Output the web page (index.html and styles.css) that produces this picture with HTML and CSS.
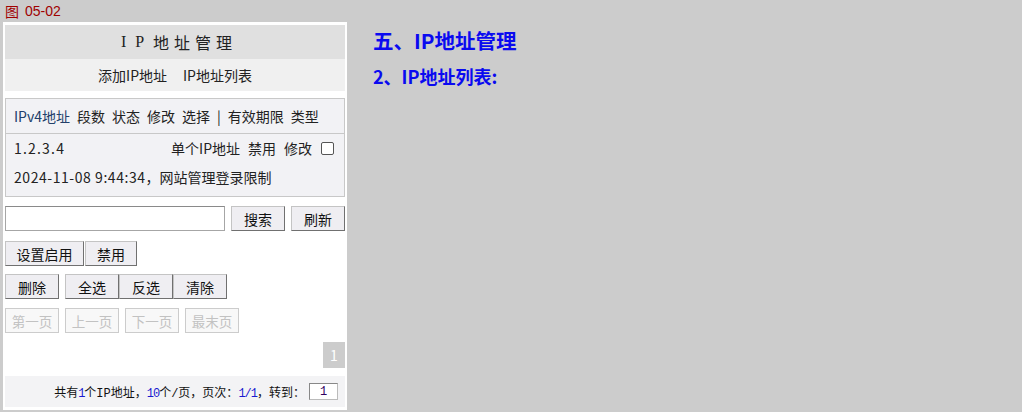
FILE: index.html
```html
<!DOCTYPE html>
<html lang="zh-CN">
<head>
<meta charset="utf-8">
<title>IP地址管理</title>
<link rel="stylesheet" href="styles.css">
</head>
<body>
<div class="page">
  <div class="left">
    <div class="fig"><span class="fig-zh">图</span><span>05-02</span></div>
    <div class="panel">
      <div class="title"><span class="lat">IP</span>地址管理</div>
      <div class="nav"><span>添加IP地址</span><span>IP地址列表</span></div>
      <div class="list">
        <div class="list-head">
          <span class="col-ip">IPv4地址</span><span>段数</span><span>状态</span><span>修改</span><span>选择</span><span class="bar">|</span><span>有效期限</span><span>类型</span>
        </div>
        <div class="list-item">
          <div class="row1">
            <span class="ip">1.2.3.4</span>
            <span class="row1-right"><span>单个IP地址</span><span>禁用</span><span>修改</span><span class="cb"></span></span>
          </div>
          <div class="row2"><span class="date">2024-11-08 9:44:34</span>，网站管理登录限制</div>
        </div>
      </div>
      <div class="btn-row r-search">
        <input class="search" type="text">
        <button class="btn w54 ml6">搜索</button>
        <button class="btn w54 ml6">刷新</button>
      </div>
      <div class="btn-row r-two">
        <button class="btn w79">设置启用</button>
        <button class="btn w52 ml1">禁用</button>
      </div>
      <div class="btn-row r-three">
        <button class="btn w54">删除</button>
        <button class="btn w54 ml6">全选</button>
        <button class="btn w54">反选</button>
        <button class="btn w54">清除</button>
      </div>
      <div class="btn-row r-four">
        <button class="btn dis w54">第一页</button>
        <button class="btn dis w54 ml6">上一页</button>
        <button class="btn dis w54 ml6">下一页</button>
        <button class="btn dis w54 ml6">最末页</button>
      </div>
      <div class="pager"><span class="pg">1</span></div>
      <div class="footer">
        <span>共有<b class="n">1</b>个IP地址，<b class="n">10</b>个/页，页次：<b class="n">1/1</b>，转到：</span><span class="goto">1</span>
      </div>
    </div>
  </div>
  <div class="right">
    <h1 class="h1">五、IP地址管理</h1>
    <h2 class="h2">2、IP地址列表:</h2>
  </div>
</div>
</body>
</html>
```

FILE: styles.css
```css
html, body {
  margin: 0;
  padding: 0;
  background: #cccccc;
}
body {
  font-family: "Noto Sans CJK SC", sans-serif;
  color: #222;
}
.page {
  display: flex;
  align-items: flex-start;
  padding-left: 3px;
}
.left {
  width: 344px;
  display: flex;
  flex-direction: column;
}
.fig {
  height: 22px;
  display: flex;
  align-items: center;
  gap: 6px;
  padding-left: 2px;
  font-family: "Liberation Sans", "Noto Sans CJK SC", sans-serif;
  font-size: 14px;
  color: #a00000;
}
.fig-zh {
  font-size: 14px;
}
.panel {
  background: #fff;
  padding: 3px 2px 3px 2px;
  display: flex;
  flex-direction: column;
}
.title {
  height: 34px;
  background: #e0e0e0;
  display: flex;
  align-items: center;
  justify-content: center;
  font-size: 16px;
  letter-spacing: 5px;
  padding-left: 8px;
  color: #222;
}
.title .lat {
  font-family: "Liberation Serif", serif;
  letter-spacing: 9px;
}
.nav {
  height: 32px;
  background: #f0f0f0;
  display: flex;
  align-items: center;
  justify-content: center;
  gap: 16px;
  font-size: 14px;
  color: #222;
}
.list {
  margin-top: 7px;
  border: 1px solid #c8c8c8;
  background: #f2f2f5;
}
.list-head {
  height: 34px;
  border-bottom: 1px solid #c8c8c8;
  display: flex;
  align-items: center;
  gap: 7px;
  padding-left: 8px;
  font-size: 14px;
  color: #222;
}
.list-head .col-ip {
  color: #23406a;
}
.list-item {
  padding: 0 10px 4px 8px;
  font-size: 14px;
  color: #222;
}
.row1 {
  height: 28px;
  display: flex;
  align-items: center;
  justify-content: space-between;
}
.ip {
  letter-spacing: 1.2px;
}
.row1-right {
  display: flex;
  align-items: center;
  gap: 8px;
}
.cb {
  width: 13px;
  height: 13px;
  box-sizing: border-box;
  border: 1px solid #555;
  border-radius: 2px;
  background: #fff;
  margin-left: 1px;
}
.row2 {
  height: 30px;
  line-height: 30px;
}
.date {
  letter-spacing: 0.55px;
}
.btn-row {
  display: flex;
  height: 25px;
}
.r-search { margin-top: 9px; }
.r-two { margin-top: 10px; }
.r-three { margin-top: 8px; }
.r-four { margin-top: 9px; }
.search {
  width: 220px;
  height: 25px;
  box-sizing: border-box;
  margin: 0;
  border: 1px solid #a6a6a6;
  border-top-color: #8a8a8a;
  background: #fff;
  padding: 0;
}
.btn {
  height: 25px;
  box-sizing: border-box;
  margin: 0;
  padding: 0;
  font-family: "Noto Sans CJK SC", sans-serif;
  font-size: 14px;
  color: #111;
  background: #efeef2;
  border: 1px solid;
  border-color: #c4c4c4 #707070 #707070 #c4c4c4;
  border-radius: 0;
}
.btn.dis {
  color: #c2c2c2;
  background: #f8f8f8;
  border-color: #cccccc;
  font-size: 13.5px;
}
.w54 { width: 54px; }
.w52 { width: 52px; }
.w79 { width: 79px; }
.ml6 { margin-left: 6px; }
.ml1 { margin-left: 1px; }
.pager {
  margin-top: 9px;
  display: flex;
  justify-content: flex-end;
}
.pg {
  width: 22px;
  height: 26px;
  background: #cccccc;
  color: #fff;
  font-size: 14px;
  display: flex;
  align-items: center;
  justify-content: center;
}
.footer {
  margin-top: 8px;
  height: 31px;
  background: #f3f3f5;
  display: flex;
  align-items: center;
  justify-content: flex-end;
  padding-right: 7px;
  font-size: 12px;
  font-family: "Liberation Mono", "Noto Sans CJK SC", monospace;
  color: #111;
}
.footer .n {
  font-weight: normal;
  color: #1a1ad0;
  letter-spacing: -1px;
}
.goto {
  margin-left: 4px;
  width: 29px;
  height: 17px;
  box-sizing: border-box;
  border: 1px solid;
  border-color: #888 #bbb #bbb #888;
  background: #fff;
  color: #300060;
  display: flex;
  align-items: center;
  justify-content: center;
  font-size: 12px;
}
.right {
  margin-left: 26px;
  padding-top: 26px;
  display: flex;
  flex-direction: column;
}
.h1 {
  margin: 0;
  font-size: 20.5px;
  line-height: 28px;
  font-weight: bold;
  color: #0a0af0;
}
.h2 {
  margin: 10px 0 0 0;
  font-size: 18px;
  line-height: 24px;
  font-weight: bold;
  color: #0a0af0;
}
```
